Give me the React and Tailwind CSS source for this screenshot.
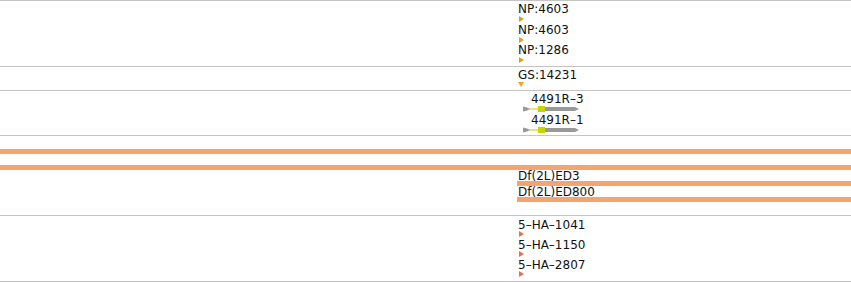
import React from "react";

const font = { fontFamily: '"DejaVu Sans", sans-serif' };

function TriRight({ color }) {
  return (
    <svg width="6" height="6" viewBox="0 0 6 6" className="block">
      <polygon points="0,0 5,3 0,6" fill={color} />
    </svg>
  );
}

function TriDown({ color }) {
  return (
    <svg width="7" height="5" viewBox="0 0 7 5" className="block">
      <polygon points="0,0 6,0 3,5" fill={color} />
    </svg>
  );
}

function Gene() {
  return (
    <svg width="58" height="6" viewBox="0 0 58 6" className="block">
      <polygon points="0,0.5 4,1.5 7,3 4,4.5 0,5.5" fill="#999999" />
      <line x1="6" y1="3" x2="15" y2="3" stroke="#c4cc00" strokeWidth="1" />
      <rect x="15" y="0" width="7" height="6" fill="#c6d400" />
      <polygon points="22,1 52,1 56,3 52,5 22,5" fill="#999999" />
    </svg>
  );
}

function Label({ children, className = "" }) {
  return (
    <div className={`text-[12px] leading-[11px] text-[#111] whitespace-nowrap ${className}`}>{children}</div>
  );
}

export default function App() {
  return (
    <div className="w-[851px] h-[282px] bg-white overflow-hidden" style={font}>
      <div className="border-t border-[#c4c4c4]" />

      {/* Track 1 */}
      <div className="h-[66px] border-b border-[#c4c4c4] pt-[3px] pl-[518px] flex flex-col">
        {["NP:4603", "NP:4603", "NP:1286"].map((t, i) => (
          <div key={i} className="h-[21px] flex flex-col">
            <Label>{t}</Label>
            <div className="pl-[1px] mt-[1px]"><TriRight color="#e2a010" /></div>
          </div>
        ))}
      </div>

      {/* Track 2 */}
      <div className="h-[24px] border-b border-[#c4c4c4] pt-[3px] pl-[518px] flex flex-col">
        <Label>GS:14231</Label>
        <div className="mt-[1px]"><TriDown color="#f0a818" /></div>
      </div>

      {/* Track 3 */}
      <div className="h-[45px] border-b border-[#c4c4c4] pt-[3px] pl-[523px] flex flex-col">
        <Label className="pl-[8px]">4491R–3</Label>
        <div className="mt-[1px]"><Gene /></div>
        <Label className="pl-[8px] mt-[3px]">4491R–1</Label>
        <div className="mt-[1px]"><Gene /></div>
      </div>

      {/* Track 4 */}
      <div className="h-[80px] border-b border-[#c4c4c4] pt-[13px] flex flex-col">
        <div className="h-[5px] bg-[#f4a471]" />
        <div className="h-[5px] bg-[#f4a471] mt-[11px]" />
        <Label className="pl-[518px] pt-[1px] h-[11px]">Df(2L)ED3</Label>
        <div className="h-[5px] bg-[#f4a471] ml-[517px]" />
        <Label className="pl-[518px] pt-[1px] h-[11px]">Df(2L)ED800</Label>
        <div className="h-[5px] bg-[#f4a471] ml-[517px]" />
      </div>

      {/* Track 5 */}
      <div className="h-[66px] border-b border-[#c4c4c4] pt-[4px] pl-[518px] flex flex-col">
        {["5–HA–1041", "5–HA–1150", "5–HA–2807"].map((t, i) => (
          <div key={i} className="h-[20px] flex flex-col">
            <Label>{t}</Label>
            <div className="pl-[1px]"><TriRight color="#f26a4c" /></div>
          </div>
        ))}
      </div>
    </div>
  );
}
